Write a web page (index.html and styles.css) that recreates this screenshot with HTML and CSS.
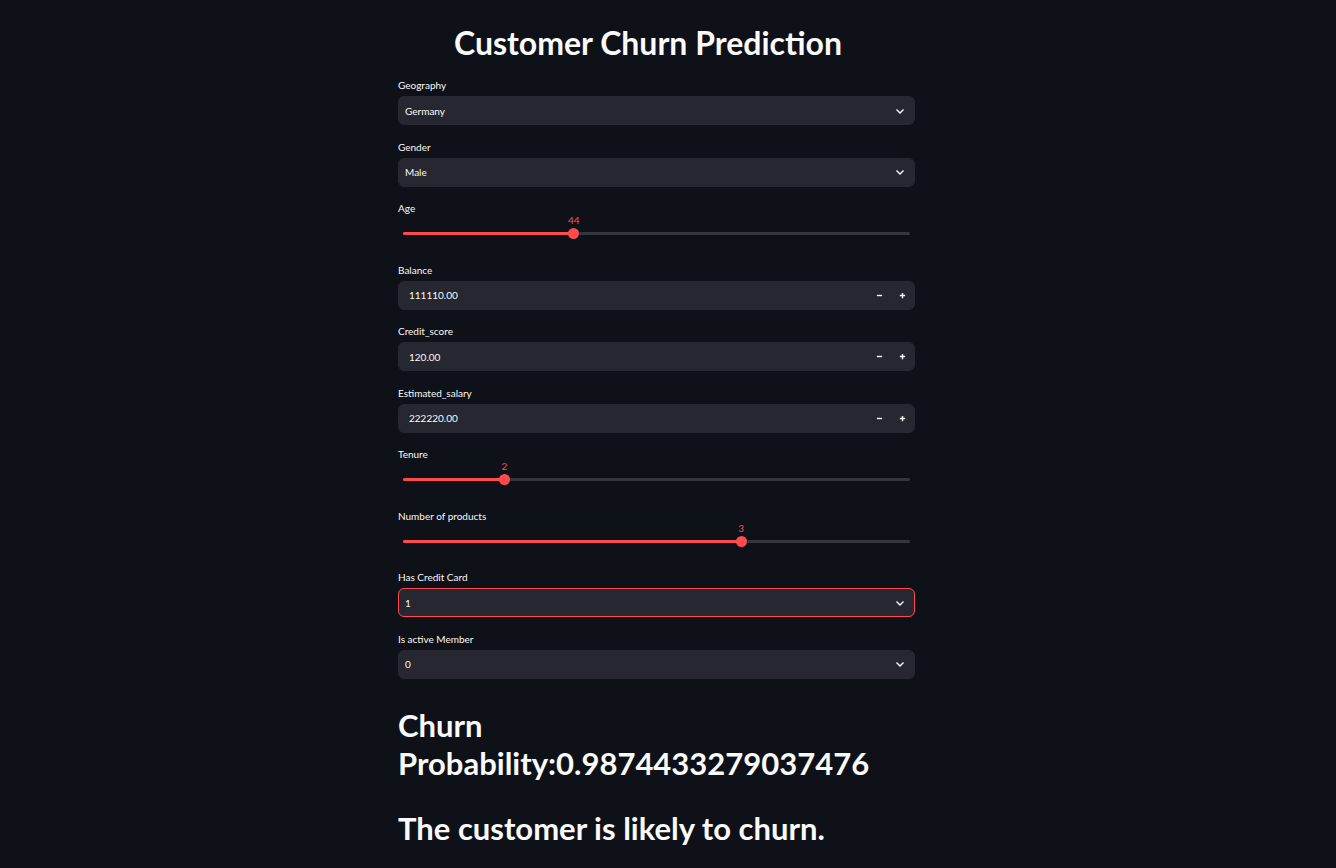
FILE: index.html
```html
<!DOCTYPE html>
<html lang="en">
<head>
  <meta charset="UTF-8">
  <meta name="viewport" content="width=device-width, initial-scale=1">
  <title>Customer Churn Prediction</title>
  <link rel="stylesheet" href="styles.css">
</head>
<body>

  <main class="block">
    <h1 class="title">Customer Churn Prediction</h1>

    <!-- Selectbox -->
    <div class="field">
      <label class="label">Geography</label>
      <div class="select">
        <span>Germany</span>
        <svg class="chevron" viewBox="0 0 12 12"><path d="M2.5 4.5 L6 8 L9.5 4.5"/></svg>
      </div>
    </div>

    <div class="field">
      <label class="label">Gender</label>
      <div class="select">
        <span>Male</span>
        <svg class="chevron" viewBox="0 0 12 12"><path d="M2.5 4.5 L6 8 L9.5 4.5"/></svg>
      </div>
    </div>

    <!-- Slider -->
    <div class="field">
      <label class="label">Age</label>
      <div class="slider">
        <div class="track">
          <div class="fill" style="width: 33.7%"></div>
          <div class="thumb" style="left: 33.7%"><span class="thumb-value">44</span></div>
        </div>
      </div>
    </div>

    <!-- Number input -->
    <div class="field">
      <label class="label">Balance</label>
      <div class="number">
        <span class="number-value">111110.00</span>
        <button class="step"><svg viewBox="0 0 8 8"><path d="M1 4 H7"/></svg></button>
        <button class="step"><svg viewBox="0 0 8 8"><path d="M1 4 H7 M4 1 V7"/></svg></button>
      </div>
    </div>

    <div class="field">
      <label class="label">Credit_score</label>
      <div class="number">
        <span class="number-value">120.00</span>
        <button class="step"><svg viewBox="0 0 8 8"><path d="M1 4 H7"/></svg></button>
        <button class="step"><svg viewBox="0 0 8 8"><path d="M1 4 H7 M4 1 V7"/></svg></button>
      </div>
    </div>

    <div class="field">
      <label class="label">Estimated_salary</label>
      <div class="number">
        <span class="number-value">222220.00</span>
        <button class="step"><svg viewBox="0 0 8 8"><path d="M1 4 H7"/></svg></button>
        <button class="step"><svg viewBox="0 0 8 8"><path d="M1 4 H7 M4 1 V7"/></svg></button>
      </div>
    </div>

    <div class="field">
      <label class="label">Tenure</label>
      <div class="slider">
        <div class="track">
          <div class="fill" style="width: 20%"></div>
          <div class="thumb" style="left: 20%"><span class="thumb-value">2</span></div>
        </div>
      </div>
    </div>

    <div class="field">
      <label class="label">Number of products</label>
      <div class="slider">
        <div class="track">
          <div class="fill" style="width: 66.7%"></div>
          <div class="thumb" style="left: 66.7%"><span class="thumb-value">3</span></div>
        </div>
      </div>
    </div>

    <div class="field">
      <label class="label">Has Credit Card</label>
      <div class="select focused">
        <span>1</span>
        <svg class="chevron" viewBox="0 0 12 12"><path d="M2.5 4.5 L6 8 L9.5 4.5"/></svg>
      </div>
    </div>

    <div class="field">
      <label class="label">Is active Member</label>
      <div class="select">
        <span>0</span>
        <svg class="chevron" viewBox="0 0 12 12"><path d="M2.5 4.5 L6 8 L9.5 4.5"/></svg>
      </div>
    </div>

    <!-- Hasil prediksi -->
    <div class="result">
      <h2>Churn Probability:0.9874433279037476</h2>
      <h2>The customer is likely to churn.</h2>
    </div>
  </main>

</body>
</html>
```

FILE: styles.css
```css
:root {
  --bg: #0e1117;
  --input: #262730;
  --text: #fafafa;
  --primary: #ff4b4b;
  --track: #34353d;
}

* {
  box-sizing: border-box;
  margin: 0;
  padding: 0;
}

body {
  font-family: Lato, 'Liberation Sans', sans-serif;
  background: var(--bg);
  color: var(--text);
  padding-right: 23px;
}

.block {
  width: 517px;
  margin: 0 auto;
  padding-top: 23px;
}

.title {
  font-size: 32px;
  line-height: 40px;
  font-weight: 700;
  text-align: center;
  padding-right: 17px;
  margin-bottom: 14px;
}

.field {
  margin-bottom: 13.5px;
}

.label {
  display: block;
  font-size: 10px;
  line-height: 16px;
  margin-bottom: 3px;
}

.select,
.number {
  height: 29px;
  background: var(--input);
  border: 1px solid var(--input);
  border-radius: 6px;
  display: flex;
  align-items: center;
  font-size: 10px;
}

.select {
  padding: 0 8px 0 6px;
  justify-content: space-between;
}

.select.focused {
  border-color: var(--primary);
}

.chevron {
  width: 12px;
  height: 12px;
  fill: none;
  stroke: var(--text);
  stroke-width: 1.4;
}

.number {
  padding-left: 10px;
}

.number-value {
  flex: 1;
}

.step {
  width: 23px;
  height: 100%;
  background: none;
  border: none;
  display: flex;
  align-items: center;
  justify-content: center;
}

.step svg {
  width: 7px;
  height: 7px;
  stroke: var(--text);
  stroke-width: 1.6;
}

.slider {
  height: 29px;
  padding: 13px 5px 0;
}

.track {
  position: relative;
  height: 3px;
  background: var(--track);
  border-radius: 2px;
}

.fill {
  height: 100%;
  background: var(--primary);
  border-radius: 2px;
}

.thumb {
  position: absolute;
  top: 50%;
  width: 11px;
  height: 11px;
  margin-left: -5.5px;
  margin-top: -5.5px;
  border-radius: 50%;
  background: var(--primary);
}

.thumb-value {
  position: absolute;
  bottom: 14px;
  left: 50%;
  transform: translateX(-50%);
  font-size: 10px;
  line-height: 10px;
  color: var(--primary);
}

.result {
  padding-top: 14px;
}

.result h2 {
  font-size: 31px;
  line-height: 38px;
  font-weight: 700;
  margin-bottom: 27px;
}
```
